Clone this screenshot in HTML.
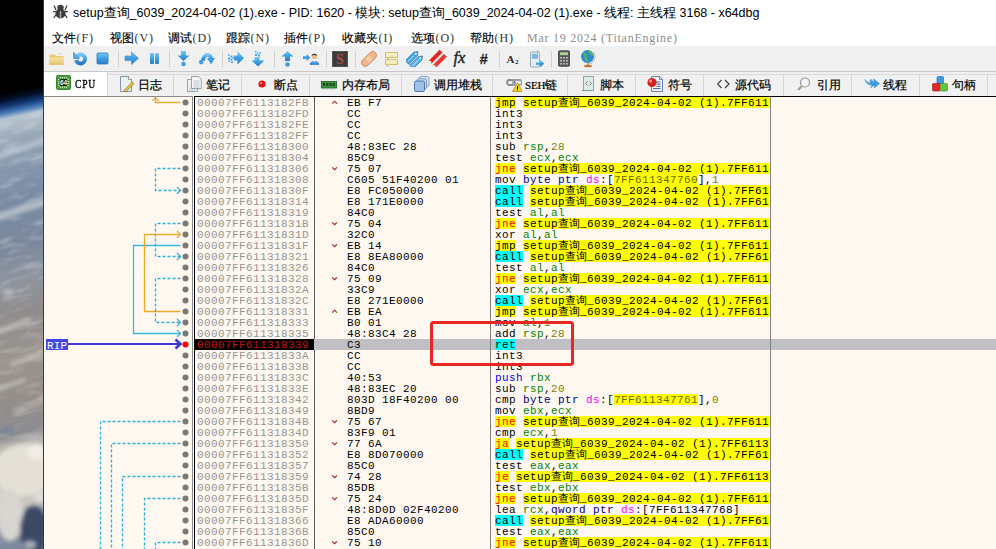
<!DOCTYPE html>
<html><head><meta charset="utf-8">
<style>
*{margin:0;padding:0;box-sizing:border-box}
html,body{width:996px;height:549px;overflow:hidden;background:#000}
body{position:relative;font-family:"Liberation Sans",sans-serif}
.abs{position:absolute}
#earth{position:absolute;left:0;top:0;width:44px;height:549px;overflow:hidden;
 background:
 linear-gradient(160deg,transparent 150px,rgba(230,235,240,.3) 156px,transparent 162px),
 linear-gradient(155deg,transparent 200px,rgba(240,240,240,.45) 206px,rgba(255,255,255,.15) 214px,transparent 218px),
 linear-gradient(158deg,transparent 300px,rgba(235,232,225,.3) 306px,transparent 314px),
 linear-gradient(150deg,transparent 335px,rgba(90,100,120,.35) 340px,transparent 346px),
 linear-gradient(170deg,#000 0,#000 90px,#020a20 96px,#10306a 102px,#5a86b8 108px,#a6b4c4 116px,#aab4c0 124px,#8a9cb0 140px,#7c90a8 180px,#7a8ca2 230px,#8a96a6 270px,#9a9ea4 300px,#8c8a8a 330px,#9a948e 370px,#8c8a88 400px,#a8a49c 420px,#d8d4ca 440px,#e8e4dc 470px,#c8c8c4 495px,#8090a0 515px,#5a6a7e 535px,#d0d0d0 549px)}
#win{position:absolute;left:44px;top:0;width:952px;height:549px;background:#fff}
#winbd{position:absolute;left:43px;top:0;width:1px;height:549px;background:#3a3a3a}
#title{position:absolute;left:73px;top:5px;font-size:12.5px;color:#000;white-space:nowrap;letter-spacing:0}
#menu{position:absolute;left:44px;top:28px;width:952px;height:18px}
.mi{position:absolute;top:2px;font-size:12px;white-space:nowrap;color:#000;-webkit-text-stroke:0.15px #000}
.mi span{font-family:"Liberation Serif",serif;font-size:12px;letter-spacing:0.9px;margin-left:0.5px;-webkit-text-stroke:0;color:#333}
#tb{position:absolute;left:44px;top:46px;width:952px;height:26px;background:#f0f0f0;border-bottom:1px solid #c9c9c9}
.sep{position:absolute;top:51px;width:1px;height:16px;background:#d2d2d2}
#tabs{position:absolute;left:44px;top:72px;width:952px;height:24px;background:#f0f0f0}
.tab{position:absolute;top:74px;height:22px;border-left:1px solid #d4d4d4;border-top:1px solid #dadada;background:#f0f0f0}
.tabt{position:absolute;top:77px;font-size:12px;white-space:nowrap;color:#000;-webkit-text-stroke:0.2px #000}
#panel{position:absolute;left:44px;top:96px;width:952px;height:453px;background:#fff8f0}
.row{position:absolute;left:0;width:996px;height:11px;font-family:"Liberation Mono",monospace;font-size:11px;letter-spacing:0.4px;line-height:13px;white-space:nowrap}
.row span{position:absolute;top:0;height:11px;overflow:hidden}
.row .a{left:197px;color:#959595}
.row .mk{left:331px;color:#c03030;font-size:10px}
.row .by{left:347px;color:#000}
.row .ds{left:495px;width:274.5px;color:#000}
.row b{font-weight:normal}
.row i{font-style:normal;letter-spacing:0;font-size:11px}
.row.rip{background:linear-gradient(90deg,transparent 314px,#c0bfc3 314px)}
.row.rip .a{left:195px;width:119px;background:#000;color:#c81010;padding-left:2px}
.cl{background:#00ffff}
.jm{background:#ffff00}
.jc{background:#ffff00;color:#ff0000}
.ad{background:#ffff00;display:inline-block;width:300px}
.r{color:#008300}
.v{color:#828200}
.sz{color:#000083}
.sg{color:#ff00ff}
.ma{background:#ffff00;color:#6a6a00}
.pu{color:#0000ff}
#vl1{position:absolute;left:192px;top:96px;width:1px;height:453px;background:#8a8a8a}
#addrbox{position:absolute;left:194px;top:96px;width:121px;height:453px;border-left:1.5px solid #000;border-right:1px solid #555}
#topline{position:absolute;left:194px;top:96px;width:802px;height:1px;background:#000}
#sidetop{position:absolute;left:44px;top:96px;width:149px;height:1px;background:#8a8a8a}
#dvl{position:absolute;left:490px;top:96px;width:1px;height:453px;background:#808080}
#dvr{position:absolute;left:770px;top:96px;width:1px;height:453px;background:#808080}
#redbox{position:absolute;left:430px;top:321px;width:143.5px;height:45px;border:3px solid #ea2622;border-radius:3.5px}
#rip{position:absolute;left:46px;top:339px;width:22px;height:11px;overflow:hidden;background:#4444e4;color:#fff;font-family:"Liberation Mono",monospace;font-size:11px;line-height:14px;letter-spacing:0.2px;padding-left:1px}
</style></head><body>
<div id="earth"><svg class="abs" style="left:0;top:0" width="44" height="549" viewBox="0 0 44 549">
<defs>
<linearGradient id="eg" x1="0" y1="0" x2="0" y2="549" gradientUnits="userSpaceOnUse">
<stop offset="0" stop-color="#000"/>
<stop offset="0.155" stop-color="#000"/>
<stop offset="0.168" stop-color="#04102a"/>
<stop offset="0.18" stop-color="#143a78"/>
<stop offset="0.192" stop-color="#4c7cb8"/>
<stop offset="0.202" stop-color="#b4c4d4"/>
<stop offset="0.215" stop-color="#b0bcc8"/>
<stop offset="0.24" stop-color="#9aa8b8"/>
<stop offset="0.30" stop-color="#8496ac"/>
<stop offset="0.36" stop-color="#788aa2"/>
<stop offset="0.44" stop-color="#7c889c"/>
<stop offset="0.50" stop-color="#8e949e"/>
<stop offset="0.56" stop-color="#908c8c"/>
<stop offset="0.64" stop-color="#9a948e"/>
<stop offset="0.72" stop-color="#948e8a"/>
<stop offset="0.78" stop-color="#8c8c90"/>
<stop offset="0.80" stop-color="#b8b4ae"/>
<stop offset="0.84" stop-color="#d8d4cc"/>
<stop offset="0.90" stop-color="#ccc8c0"/>
<stop offset="0.95" stop-color="#8a90a0"/>
<stop offset="1" stop-color="#76849a"/>
</linearGradient>
<filter id="eb" x="-50%" y="-50%" width="200%" height="200%"><feGaussianBlur stdDeviation="2"/></filter>
<filter id="tx" x="0" y="0" width="100%" height="100%"><feTurbulence type="fractalNoise" baseFrequency="0.04 0.13" numOctaves="3" seed="7"/><feColorMatrix type="matrix" values="0 0 0 0 1  0 0 0 0 1  0 0 0 0 1  1.6 0 0 0 -0.75"/></filter>
<filter id="eb1" x="-50%" y="-50%" width="200%" height="200%"><feGaussianBlur stdDeviation="1"/></filter>
</defs>
<g transform="translate(0,9) skewY(-12)">
<rect x="0" y="0" width="44" height="560" fill="url(#eg)"/>
</g>
<g filter="url(#eb)" opacity="0.5">
<path d="M-5 155 L50 136 L50 141 L-5 160z" fill="#dfe6ee"/>
<path d="M-5 214 L50 197 L50 204 L-5 221z" fill="#f4f4f4"/>
<path d="M-5 330 L30 318 L30 323 L-5 335z" fill="#f0f0f0"/>
<path d="M10 362 L50 346 L50 352 L10 368z" fill="#d8d0c4"/>
<path d="M-5 388 L25 378 L25 382 L-5 392z" fill="#e8e4dc"/>
<path d="M15 410 L50 396 L50 401 L15 415z" fill="#cfc8bc"/>
<ellipse cx="8" cy="292" rx="6" ry="3" fill="#e8e8e8"/>
</g>
<g transform="skewY(-14)"><rect x="0" y="120" width="44" height="450" filter="url(#tx)" opacity="0.4"/></g>
<g filter="url(#eb)">
<ellipse cx="24" cy="470" rx="30" ry="26" fill="#e4e0d6"/><ellipse cx="36" cy="452" rx="10" ry="8" fill="#f0ece4"/>
<ellipse cx="10" cy="515" rx="13" ry="26" fill="#d8d6d0"/>
<ellipse cx="34" cy="530" rx="14" ry="24" fill="#3a4864"/>
<ellipse cx="30" cy="545" rx="6" ry="4" fill="#a8b0bc"/>
<ellipse cx="40" cy="498" rx="5" ry="4" fill="#e4e4e4"/>
<ellipse cx="6" cy="430" rx="8" ry="4" fill="#7a8498"/>
</g>
</svg></div>
<div id="win"></div>
<div id="winbd"></div>
<!-- title -->
<svg class="abs" style="left:52px;top:4px" width="17" height="15" viewBox="0 0 17 15">
 <g fill="#3c3c3c"><ellipse cx="8.5" cy="9.5" rx="5" ry="5"/><ellipse cx="8.5" cy="3.6" rx="3.2" ry="2.8"/></g>
 <g stroke="#3c3c3c" stroke-width="1.3" fill="none"><path d="M1 7.7H16M2 1.5 L4 6 M15 1.5 L13 6 M1.8 14 L4 10.5 M15.2 14 L13 10.5"/></g>
 <rect x="7.8" y="7" width="1.4" height="7" fill="#aaa"/>
</svg>
<div id="title">setup查询_6039_2024-04-02 (1).exe - PID: 1620 - 模块: setup查询_6039_2024-04-02 (1).exe - 线程: 主线程 3168 - x64dbg</div>
<!-- menu -->
<div class="mi" style="left:52px;top:30px">文件<span>(F)</span></div>
<div class="mi" style="left:110px;top:30px">视图<span>(V)</span></div>
<div class="mi" style="left:168px;top:30px">调试<span>(D)</span></div>
<div class="mi" style="left:226px;top:30px">跟踪<span>(N)</span></div>
<div class="mi" style="left:284px;top:30px">插件<span>(P)</span></div>
<div class="mi" style="left:342px;top:30px">收藏夹<span>(I)</span></div>
<div class="mi" style="left:411px;top:30px">选项<span>(O)</span></div>
<div class="mi" style="left:470px;top:30px">帮助<span>(H)</span></div>
<div class="mi" style="left:527px;top:31px;font-family:'Liberation Serif',serif;font-size:12px;letter-spacing:0.75px;color:#8e8e8e;-webkit-text-stroke:0">Mar 19 2024 (TitanEngine)</div>
<!-- toolbar -->
<div id="tb"></div>
<svg width="0" height="0" style="position:absolute"><defs>
<linearGradient id="gb" x1="0" y1="0" x2="0" y2="1"><stop offset="0" stop-color="#7cc8f4"/><stop offset="0.5" stop-color="#3d9ee4"/><stop offset="1" stop-color="#2a7cc8"/></linearGradient>
<linearGradient id="gy" x1="0" y1="0" x2="0" y2="1"><stop offset="0" stop-color="#f6e4a4"/><stop offset="1" stop-color="#e2c46c"/></linearGradient>
<linearGradient id="gc" x1="0" y1="0" x2="0" y2="1"><stop offset="0" stop-color="#fbf6d6"/><stop offset="1" stop-color="#ece098"/></linearGradient>
</defs></svg>
<svg class="abs" style="left:48px;top:52px" width="18" height="14" viewBox="0 0 18 14"><path d="M1.5 2.5h5.5l1.5 1.5h7v9h-14z" fill="#e8cc74"/><path d="M1.5 5.5h14.5l-0.5 7.5h-14z" fill="url(#gy)"/><path d="M10 1.5h4l1 1h-5z" fill="#d8d8c8"/></svg>
<svg class="abs" style="left:71px;top:49px" width="18" height="18" viewBox="0 0 18 18"><path d="M6.4 6.8 A4.5 4.5 0 1 1 5.2 10.8" fill="none" stroke="url(#gb)" stroke-width="3.9"/><path d="M2.6 3.4 L2.6 9.4 L8.6 9.4 z" fill="#5cb0ea" stroke="#3a88cc" stroke-width="0.8" stroke-linejoin="round"/></svg>
<svg class="abs" style="left:96px;top:52px" width="13" height="13" viewBox="0 0 13 13"><rect x="1" y="1" width="11" height="11" rx="1" fill="url(#gb)" stroke="#2c7ac4" stroke-width="0.8"/></svg>
<svg class="abs" style="left:124px;top:51px" width="16" height="15" viewBox="0 0 16 15"><path d="M1 5h6.5v-4l7 6.3-7 6.3v-4h-6.5z" fill="url(#gb)" stroke="#3a8ad0" stroke-width="0.6"/></svg>
<svg class="abs" style="left:149px;top:52px" width="11" height="13" viewBox="0 0 11 13"><rect x="1" y="1" width="4" height="11" rx="1" fill="url(#gb)"/><rect x="6" y="1" width="4" height="11" rx="1" fill="url(#gb)"/></svg>
<svg class="abs" style="left:177px;top:50px" width="13" height="17" viewBox="0 0 13 17"><path d="M4 1h5v4.5h3.5l-6 5.5-6-5.5h3.5z" fill="url(#gb)"/><circle cx="6.5" cy="14" r="2.3" fill="#3d9ee4"/></svg>
<svg class="abs" style="left:198px;top:50px" width="18" height="17" viewBox="0 0 18 17"><path d="M5 10.5 C5.5 6 8 4.5 10.5 5 C12 5.3 12.8 6.5 13 8" fill="none" stroke="url(#gb)" stroke-width="3.8"/><path d="M9 8 L17 8 L13 14.6z" fill="#3d9ee4"/><circle cx="3.3" cy="12.1" r="2.3" fill="#3d9ee4"/></svg>
<svg class="abs" style="left:227px;top:51px" width="18" height="15" viewBox="0 0 18 15"><path d="M7 4.5h3.5v-4l6.5 6.5-6.5 6.5v-4h-3.5z" fill="url(#gb)"/><g fill="#4aa4e6"><rect x="1" y="3.5" width="1.5" height="1.5"/><rect x="3.5" y="4.5" width="2" height="2"/><rect x="1" y="6.5" width="2" height="2"/><rect x="3.5" y="7.5" width="2" height="2"/><rect x="1.5" y="9.5" width="1.5" height="1.5"/><rect x="4" y="10.5" width="2" height="1.5"/><rect x="5.5" y="6" width="1.5" height="1.5"/></g></svg>
<svg class="abs" style="left:251px;top:50px" width="15" height="17" viewBox="0 0 15 17"><path d="M3.5 7h5v3.5h5l-6.5 6-6.5-6h3z" fill="url(#gb)"/><g fill="#4aa4e6"><rect x="4" y="1" width="1.5" height="1.5"/><rect x="6" y="2.5" width="1.5" height="1.5"/><rect x="8.5" y="2" width="1.5" height="1.5"/><rect x="4" y="4" width="2" height="2"/><rect x="7" y="4.5" width="2" height="2"/></g></svg>
<svg class="abs" style="left:281px;top:50px" width="13" height="17" viewBox="0 0 13 17"><path d="M6.5 1l6 5.5h-3.5v4.5h-5v-4.5h-3.5z" fill="url(#gb)"/><circle cx="6.5" cy="14.5" r="2.3" fill="#3d9ee4"/></svg>
<svg class="abs" style="left:302px;top:51px" width="18" height="15" viewBox="0 0 18 15"><path d="M1 5.3h3.6v-2.3l3.8 3.6-3.8 3.6v-2.3h-3.6z" fill="#3d9ee4"/><circle cx="12.4" cy="5.4" r="2.7" fill="#e8c090"/><path d="M9.6 5 C9.6 2 15.2 2 15.2 5 C14 3.8 11 3.8 9.6 5z" fill="#3a2a1a"/><path d="M8 13.5 C8 9.2 16.8 9.2 16.8 13.5z" fill="url(#gb)" stroke="#2a70b8" stroke-width="0.6"/><path d="M11.6 9 L12.4 11.5 L13.2 9z" fill="#fff"/></svg>
<svg class="abs" style="left:332px;top:51px" width="16" height="16" viewBox="0 0 16 16"><rect width="16" height="16" fill="#3c3a3a"/><rect x="0.5" y="0.5" width="15" height="15" fill="none" stroke="#555"/><text x="8" y="13" text-anchor="middle" font-family="Liberation Serif" font-weight="bold" font-size="14" fill="#b04a4e">S</text></svg>
<svg class="abs" style="left:360px;top:50px" width="18" height="18" viewBox="0 0 18 18"><g transform="rotate(-45 9 9)"><rect x="0" y="5.2" width="18" height="7.6" rx="3.8" fill="#f2b48a" stroke="#d08a60" stroke-width="0.9"/><rect x="6.5" y="6.5" width="5" height="5" fill="#f8d0a8"/></g></svg>
<svg class="abs" style="left:384px;top:51px" width="15" height="16" viewBox="0 0 15 16"><path d="M1.5 1.5h12v5h-8l-2 1.8v-1.8h-2z" fill="url(#gc)" stroke="#c8b464" stroke-width="0.9"/><path d="M1.5 8.8h12v4.7h-8l-2 1.8v-1.8h-2z" fill="url(#gc)" stroke="#c8b464" stroke-width="0.9"/></svg>
<svg class="abs" style="left:406px;top:50px" width="18" height="17" viewBox="0 0 18 17"><g transform="rotate(-45 9 8.5)"><path d="M0.5 3.2h12l3.5 2.5-3.5 2.5h-12z" fill="#48a8e4" stroke="#2a6eb4" stroke-width="0.7"/><circle cx="13" cy="5.7" r="0.9" fill="#fff"/><path d="M2 5.7h8" stroke="#d8eeff" stroke-width="0.8"/><path d="M0.5 9.5h12l3.5 2.5-3.5 2.5h-12z" fill="#58b4ec" stroke="#2a6eb4" stroke-width="0.7"/><circle cx="13" cy="12" r="0.9" fill="#fff"/><path d="M2 12h8" stroke="#d8eeff" stroke-width="0.8"/></g></svg>
<svg class="abs" style="left:429px;top:50px" width="18" height="17" viewBox="0 0 18 17"><g transform="rotate(-45 9 8.5)"><path d="M0.5 3.5h15.5v4h-15.5l1.8-2z" fill="#e42424"/><path d="M0.5 9.5h15.5v4h-15.5l1.8-2z" fill="#f03434"/><path d="M16 3.5v4M16 9.5v4" stroke="#b01010" stroke-width="0.8"/></g></svg>
<svg class="abs" style="left:452px;top:49px" width="18" height="18" viewBox="0 0 18 18"><text x="1.5" y="14" font-family="Liberation Serif" font-style="italic" font-size="16.5" fill="#2a2a2a" stroke="#2a2a2a" stroke-width="0.45">fx</text></svg>
<svg class="abs" style="left:478.5px;top:49px" width="14" height="18" viewBox="0 0 14 18"><text x="0.5" y="14.5" font-family="Liberation Sans" font-weight="bold" font-style="italic" font-size="14.5" fill="#2a2a2a" stroke="#2a2a2a" stroke-width="0.3">#</text></svg>
<svg class="abs" style="left:506px;top:53px" width="15" height="12" viewBox="0 0 15 12"><text x="0.5" y="10" font-family="Liberation Serif" font-weight="bold" font-size="11" fill="#2e2e2e">A</text><text x="9" y="10.5" font-family="Liberation Serif" font-weight="bold" font-size="7" fill="#2e2e2e">2</text></svg>
<svg class="abs" style="left:529px;top:50px" width="17" height="18" viewBox="0 0 17 18"><rect x="1.5" y="2" width="9" height="15" rx="1.2" fill="#e6ecf0" stroke="#8898a8" stroke-width="0.8"/><rect x="3" y="3.8" width="6" height="5" fill="#7ab8e4"/><path d="M9 0.5v2" stroke="#8898a8"/><path d="M7 12.5h4v-2.5l4.5 3.6-4.5 3.6v-2.5h-4z" fill="url(#gb)"/></svg>
<svg class="abs" style="left:558px;top:50px" width="12" height="17" viewBox="0 0 12 17"><rect x="0.5" y="0.8" width="11" height="15.5" rx="1" fill="#5a5a5a" stroke="#3a3a3a" stroke-width="0.8"/><rect x="2" y="2.3" width="8" height="2.8" fill="#a8d090"/><g fill="#b8b8b8"><rect x="2" y="7" width="2" height="1.6"/><rect x="5" y="7" width="2" height="1.6"/><rect x="8" y="7" width="2" height="1.6"/><rect x="2" y="10" width="2" height="1.6"/><rect x="5" y="10" width="2" height="1.6"/><rect x="8" y="10" width="2" height="1.6"/><rect x="2" y="13" width="2" height="1.6"/><rect x="5" y="13" width="2" height="1.6"/><rect x="8" y="13" width="2" height="1.6"/></g></svg>
<svg class="abs" style="left:580px;top:49px" width="16" height="19" viewBox="0 0 16 19"><circle cx="7.5" cy="7.5" r="6.5" fill="#2c8ad4"/><path d="M3 4.5c2 0 3 1.5 2.5 3.5s1.5 2.5 2 4.5M8.5 2c1 2 3.5 1.5 4 4.5" stroke="#5cb84a" stroke-width="2.2" fill="none"/><path d="M13.5 3 A7.5 7.5 0 0 1 9 15" stroke="#b0b0b0" stroke-width="0.9" fill="none"/><ellipse cx="8" cy="17" rx="4" ry="1.3" fill="#c87434"/><rect x="7.3" y="14.2" width="1.4" height="2.5" fill="#c87434"/></svg>
<div class="sep" style="left:117.5px"></div>
<div class="sep" style="left:169px"></div>
<div class="sep" style="left:221.5px"></div>
<div class="sep" style="left:273.5px"></div>
<div class="sep" style="left:325.5px"></div>
<div class="sep" style="left:354.5px"></div>
<div class="sep" style="left:498.5px"></div>
<div class="sep" style="left:550.5px"></div>
<!-- tabs -->
<div id="tabs"></div>
<div class="abs" style="left:44px;top:72px;width:64px;height:24px;background:#fff;border-right:1px solid #d0d0d0"></div>
<div class="tab" style="left:107px;width:66px"></div>
<svg class="abs" style="left:119px;top:76px" width="16" height="16" viewBox="0 0 16 16"><path d="M1.5 0.5h8l3 3v12h-11z" fill="#e8f0f2" stroke="#7a8a96" stroke-width="0.9"/><path d="M9.5 0.5v3h3" fill="#fff" stroke="#7a8a96" stroke-width="0.8"/><path d="M5.5 14 L13.2 6 L15 7.8 L7.3 15.6 L5 16z" fill="#f0c040" stroke="#806020" stroke-width="0.6"/></svg>
<div class="tabt" style="left:138px">日志</div>
<div class="tab" style="left:173px;width:68px"></div>
<svg class="abs" style="left:186.5px;top:76px" width="16" height="16" viewBox="0 0 16 16"><path d="M0.5 3.5h8l2 2v10h-10z" fill="#eef2f4" stroke="#8a9aa4" stroke-width="0.9"/><path d="M4.5 0.5h7l2.8 2.8v9.2h-9.8z" fill="#f4f6f8" stroke="#8a9aa4" stroke-width="0.9"/><g stroke="#a8b8c4" stroke-width="0.7"><path d="M6.5 5h6M6.5 7h6M6.5 9h6M6.5 11h6M2 12h3M2 14h6"/></g></svg>
<div class="tabt" style="left:205.5px">笔记</div>
<div class="tab" style="left:241px;width:68px"></div>
<svg class="abs" style="left:257.5px;top:80px" width="8" height="8" viewBox="0 0 8 8"><circle cx="4" cy="4" r="3.6" fill="#e01010"/><circle cx="3" cy="3" r="1.2" fill="#ff8080"/></svg>
<div class="tabt" style="left:273.5px">断点</div>
<div class="tab" style="left:309px;width:92px"></div>
<svg class="abs" style="left:321px;top:78.5px" width="16" height="11" viewBox="0 0 16 11"><rect x="0.5" y="2.5" width="15" height="6.5" fill="#3c9a3c" stroke="#1c5a1c" stroke-width="0.8"/><g fill="#1e4a1e"><rect x="2" y="4" width="2.2" height="3"/><rect x="5.2" y="4" width="2.2" height="3"/><rect x="8.4" y="4" width="2.2" height="3"/><rect x="11.6" y="4" width="2.2" height="3"/></g><g fill="#c8b040"><rect x="2" y="9" width="1" height="1.5"/><rect x="4" y="9" width="1" height="1.5"/><rect x="6" y="9" width="1" height="1.5"/><rect x="8" y="9" width="1" height="1.5"/><rect x="10" y="9" width="1" height="1.5"/><rect x="12" y="9" width="1" height="1.5"/></g></svg>
<div class="tabt" style="left:342px">内存布局</div>
<div class="tab" style="left:401px;width:91px"></div>
<svg class="abs" style="left:413.5px;top:76px" width="16" height="16" viewBox="0 0 16 16"><rect x="5.5" y="0.5" width="9.5" height="10" rx="1.5" fill="#d8e6f4" stroke="#7a94b8" stroke-width="0.8"/><rect x="3" y="2.8" width="9.5" height="10" rx="1.5" fill="#c4d8ee" stroke="#6a88b0" stroke-width="0.8"/><rect x="0.5" y="5" width="10" height="10.5" rx="1.5" fill="#9cc0e8" stroke="#4a70a8" stroke-width="0.9"/></svg>
<div class="tabt" style="left:434px">调用堆栈</div>
<div class="tab" style="left:492px;width:75px"></div>
<svg class="abs" style="left:505.5px;top:76px" width="16" height="16" viewBox="0 0 16 16"><rect x="1" y="4" width="8" height="5" rx="2.5" fill="none" stroke="#8a8a8a" stroke-width="1.8"/><rect x="7" y="4" width="9" height="5" rx="2.5" fill="none" stroke="#a0a0a0" stroke-width="1.8"/><path d="M6.5 15.5l5-8.5 5 8.5z" fill="#f4d428" stroke="#a88a00" stroke-width="0.7"/><rect x="11" y="10" width="1" height="3" fill="#000"/><rect x="11" y="13.6" width="1" height="1" fill="#000"/></svg>
<div class="tabt" style="left:525px"><span style="font-family:'Liberation Serif',serif;font-size:11px;letter-spacing:-0.2px">SEH</span>链</div>
<div class="tab" style="left:567px;width:68px"></div>
<svg class="abs" style="left:581px;top:76px" width="16" height="16" viewBox="0 0 16 16"><path d="M2.5 0.5h10v14h-10z" fill="#dfeaea" stroke="#8a9a9a" stroke-width="0.9"/><path d="M6.5 5.5l-2 2 2 2M8.5 5.5l2 2-2 2" stroke="#707070" stroke-width="0.9" fill="none"/><path d="M0.5 14.5h12" stroke="#8a9a9a"/></svg>
<div class="tabt" style="left:599.5px">脚本</div>
<div class="tab" style="left:635px;width:67.5px"></div>
<svg class="abs" style="left:647px;top:76px" width="16" height="16" viewBox="0 0 16 16"><path d="M4.5 0.5h8l3 3v12h-11z" fill="#f4f6fa" stroke="#5a76a8" stroke-width="0.9"/><path d="M12.5 0.5v3h3" fill="none" stroke="#5a76a8" stroke-width="0.8"/><g stroke="#3a62b0" stroke-width="1"><path d="M8.5 6h5M9.5 8.2h4M9.5 10.4h4M6 12.6h7.5"/></g><circle cx="5" cy="6.5" r="4.6" fill="#d42222"/><circle cx="3.6" cy="5" r="1.6" fill="#ff9a9a"/></svg>
<div class="tabt" style="left:668px">符号</div>
<div class="tab" style="left:702.5px;width:80.5px"></div>
<svg class="abs" style="left:717px;top:78px" width="13" height="12" viewBox="0 0 13 12"><path d="M4.5 2l-4 4 4 4M8 2l4 4-4 4" stroke="#404040" stroke-width="1.2" fill="none"/></svg>
<div class="tabt" style="left:734.5px">源代码</div>
<div class="tab" style="left:783px;width:68px"></div>
<svg class="abs" style="left:797px;top:77px" width="13" height="14" viewBox="0 0 13 14"><circle cx="8" cy="5.5" r="4.5" fill="#f4f4f4" stroke="#9a9a9a" stroke-width="1.2"/><path d="M5 9 L1 13" stroke="#b0a080" stroke-width="2.2"/></svg>
<div class="tabt" style="left:816.5px">引用</div>
<div class="tab" style="left:851px;width:67.5px"></div>
<svg class="abs" style="left:863.5px;top:76px" width="16" height="16" viewBox="0 0 16 16"><path d="M1 3.5 C3 6.5 6 7 8 6.5 L6.5 3 L11.5 7.5 L7 12 L8 9 C5 9.5 2 8 1 3.5z" fill="#58b0ec" stroke="#3a8ad0" stroke-width="0.5"/><path d="M6 4 C8 7 10 7.5 11 7 L9.5 3 L15.5 7.5 L10 12 L11 9.5 C9 10 7 8.5 6 4z" fill="#3d9ee4" stroke="#2a7cc8" stroke-width="0.5"/></svg>
<div class="tabt" style="left:883px">线程</div>
<div class="tab" style="left:918.5px;width:68.5px"></div>
<svg class="abs" style="left:931.5px;top:76px" width="16" height="16" viewBox="0 0 16 16"><rect x="5" y="0.5" width="6.5" height="7.5" rx="1" fill="#3a9ae0" stroke="#1a68b0" stroke-width="0.6"/><rect x="0.5" y="7.5" width="7.5" height="7.5" rx="1" fill="#e42828" stroke="#a01010" stroke-width="0.6"/><rect x="8" y="7.5" width="7.5" height="7.5" rx="1" fill="#6cc040" stroke="#3a8a20" stroke-width="0.6"/></svg>
<div class="tabt" style="left:951.5px">句柄</div>
<div class="tab" style="left:987px;width:113px"></div>
<svg class="abs" style="left:56px;top:75px" width="15" height="15" viewBox="0 0 15 15"><rect x="0.5" y="0.5" width="14" height="14" rx="1.2" fill="#48a040" stroke="#2a6a22" stroke-width="0.8"/><g fill="#b8e8a0"><rect x="4" y="2" width="1" height="1.6"/><rect x="4" y="11.4" width="1" height="1.6"/><rect x="2" y="4" width="1.6" height="1"/><rect x="11.4" y="4" width="1.6" height="1"/><rect x="6" y="2" width="1" height="1.6"/><rect x="6" y="11.4" width="1" height="1.6"/><rect x="2" y="6" width="1.6" height="1"/><rect x="11.4" y="6" width="1.6" height="1"/><rect x="8" y="2" width="1" height="1.6"/><rect x="8" y="11.4" width="1" height="1.6"/><rect x="2" y="8" width="1.6" height="1"/><rect x="11.4" y="8" width="1.6" height="1"/><rect x="10" y="2" width="1" height="1.6"/><rect x="10" y="11.4" width="1" height="1.6"/><rect x="2" y="10" width="1.6" height="1"/><rect x="11.4" y="10" width="1.6" height="1"/></g><rect x="3.8" y="4" width="7.4" height="7" fill="#1a2a18"/><text x="7.5" y="10.2" text-anchor="middle" font-family="Liberation Sans" font-weight="bold" font-size="6.5" fill="#f0f0f0">64</text></svg>
<div class="tabt" style="left:75px;top:77px;font-family:'Liberation Serif',serif;font-size:12px;letter-spacing:1px;transform:scaleX(0.8);transform-origin:0 0;-webkit-text-stroke:0.35px #000;color:#000">CPU</div>
<!-- panel -->
<div id="panel"></div>
<div id="sidetop"></div>
<div id="vl1"></div>
<div id="addrbox"></div>
<div class="row" style="top:97px"><span class="a">00007FF6113182FB</span><span class="mk"></span><span class="by">EB F7</span><span class="ds"><b class="jm">jmp</b> <b class="ad">setup<i>查询</i>_6039_2024-04-02 (1).7FF611</b></span></div>
<div class="row" style="top:108px"><span class="a">00007FF6113182FD</span><span class="mk"></span><span class="by">CC</span><span class="ds">int3</span></div>
<div class="row" style="top:119px"><span class="a">00007FF6113182FE</span><span class="mk"></span><span class="by">CC</span><span class="ds">int3</span></div>
<div class="row" style="top:130px"><span class="a">00007FF6113182FF</span><span class="mk"></span><span class="by">CC</span><span class="ds">int3</span></div>
<div class="row" style="top:141px"><span class="a">00007FF611318300</span><span class="mk"></span><span class="by">48:83EC 28</span><span class="ds">sub <b class="r">rsp</b>,<b class="v">28</b></span></div>
<div class="row" style="top:152px"><span class="a">00007FF611318304</span><span class="mk"></span><span class="by">85C9</span><span class="ds">test <b class="r">ecx</b>,<b class="r">ecx</b></span></div>
<div class="row" style="top:163px"><span class="a">00007FF611318306</span><span class="mk"></span><span class="by">75 07</span><span class="ds"><b class="jc">jne</b> <b class="ad">setup<i>查询</i>_6039_2024-04-02 (1).7FF611</b></span></div>
<div class="row" style="top:174px"><span class="a">00007FF611318308</span><span class="mk"></span><span class="by">C605 51F40200 01</span><span class="ds">mov <b class="sz">byte ptr</b> <b class="sg">ds</b>:[<b class="ma">7FF611347760</b>],<b class="v">1</b></span></div>
<div class="row" style="top:185px"><span class="a">00007FF61131830F</span><span class="mk"></span><span class="by">E8 FC050000</span><span class="ds"><b class="cl">call</b> <b class="ad">setup<i>查询</i>_6039_2024-04-02 (1).7FF61</b></span></div>
<div class="row" style="top:196px"><span class="a">00007FF611318314</span><span class="mk"></span><span class="by">E8 171E0000</span><span class="ds"><b class="cl">call</b> <b class="ad">setup<i>查询</i>_6039_2024-04-02 (1).7FF61</b></span></div>
<div class="row" style="top:207px"><span class="a">00007FF611318319</span><span class="mk"></span><span class="by">84C0</span><span class="ds">test <b class="r">al</b>,<b class="r">al</b></span></div>
<div class="row" style="top:218px"><span class="a">00007FF61131831B</span><span class="mk"></span><span class="by">75 04</span><span class="ds"><b class="jc">jne</b> <b class="ad">setup<i>查询</i>_6039_2024-04-02 (1).7FF611</b></span></div>
<div class="row" style="top:229px"><span class="a">00007FF61131831D</span><span class="mk"></span><span class="by">32C0</span><span class="ds">xor <b class="r">al</b>,<b class="r">al</b></span></div>
<div class="row" style="top:240px"><span class="a">00007FF61131831F</span><span class="mk"></span><span class="by">EB 14</span><span class="ds"><b class="jm">jmp</b> <b class="ad">setup<i>查询</i>_6039_2024-04-02 (1).7FF611</b></span></div>
<div class="row" style="top:251px"><span class="a">00007FF611318321</span><span class="mk"></span><span class="by">E8 8EA80000</span><span class="ds"><b class="cl">call</b> <b class="ad">setup<i>查询</i>_6039_2024-04-02 (1).7FF61</b></span></div>
<div class="row" style="top:262px"><span class="a">00007FF611318326</span><span class="mk"></span><span class="by">84C0</span><span class="ds">test <b class="r">al</b>,<b class="r">al</b></span></div>
<div class="row" style="top:273px"><span class="a">00007FF611318328</span><span class="mk"></span><span class="by">75 09</span><span class="ds"><b class="jc">jne</b> <b class="ad">setup<i>查询</i>_6039_2024-04-02 (1).7FF611</b></span></div>
<div class="row" style="top:284px"><span class="a">00007FF61131832A</span><span class="mk"></span><span class="by">33C9</span><span class="ds">xor <b class="r">ecx</b>,<b class="r">ecx</b></span></div>
<div class="row" style="top:295px"><span class="a">00007FF61131832C</span><span class="mk"></span><span class="by">E8 271E0000</span><span class="ds"><b class="cl">call</b> <b class="ad">setup<i>查询</i>_6039_2024-04-02 (1).7FF61</b></span></div>
<div class="row" style="top:306px"><span class="a">00007FF611318331</span><span class="mk"></span><span class="by">EB EA</span><span class="ds"><b class="jm">jmp</b> <b class="ad">setup<i>查询</i>_6039_2024-04-02 (1).7FF611</b></span></div>
<div class="row" style="top:317px"><span class="a">00007FF611318333</span><span class="mk"></span><span class="by">B0 01</span><span class="ds">mov <b class="r">al</b>,<b class="v">1</b></span></div>
<div class="row" style="top:328px"><span class="a">00007FF611318335</span><span class="mk"></span><span class="by">48:83C4 28</span><span class="ds">add <b class="r">rsp</b>,<b class="v">28</b></span></div>
<div class="row rip" style="top:339px"><span class="a">00007FF611318339</span><span class="mk"></span><span class="by">C3</span><span class="ds"><b class="cl">ret</b></span></div>
<div class="row" style="top:350px"><span class="a">00007FF61131833A</span><span class="mk"></span><span class="by">CC</span><span class="ds">int3</span></div>
<div class="row" style="top:361px"><span class="a">00007FF61131833B</span><span class="mk"></span><span class="by">CC</span><span class="ds">int3</span></div>
<div class="row" style="top:372px"><span class="a">00007FF61131833C</span><span class="mk"></span><span class="by">40:53</span><span class="ds"><b class="pu">push</b> <b class="r">rbx</b></span></div>
<div class="row" style="top:383px"><span class="a">00007FF61131833E</span><span class="mk"></span><span class="by">48:83EC 20</span><span class="ds">sub <b class="r">rsp</b>,<b class="v">20</b></span></div>
<div class="row" style="top:394px"><span class="a">00007FF611318342</span><span class="mk"></span><span class="by">803D 18F40200 00</span><span class="ds">cmp <b class="sz">byte ptr</b> <b class="sg">ds</b>:[<b class="ma">7FF611347761</b>],<b class="v">0</b></span></div>
<div class="row" style="top:405px"><span class="a">00007FF611318349</span><span class="mk"></span><span class="by">8BD9</span><span class="ds">mov <b class="r">ebx</b>,<b class="r">ecx</b></span></div>
<div class="row" style="top:416px"><span class="a">00007FF61131834B</span><span class="mk"></span><span class="by">75 67</span><span class="ds"><b class="jc">jne</b> <b class="ad">setup<i>查询</i>_6039_2024-04-02 (1).7FF611</b></span></div>
<div class="row" style="top:427px"><span class="a">00007FF61131834D</span><span class="mk"></span><span class="by">83F9 01</span><span class="ds">cmp <b class="r">ecx</b>,<b class="v">1</b></span></div>
<div class="row" style="top:438px"><span class="a">00007FF611318350</span><span class="mk"></span><span class="by">77 6A</span><span class="ds"><b class="jc">ja</b> <b class="ad">setup<i>查询</i>_6039_2024-04-02 (1).7FF6113</b></span></div>
<div class="row" style="top:449px"><span class="a">00007FF611318352</span><span class="mk"></span><span class="by">E8 8D070000</span><span class="ds"><b class="cl">call</b> <b class="ad">setup<i>查询</i>_6039_2024-04-02 (1).7FF61</b></span></div>
<div class="row" style="top:460px"><span class="a">00007FF611318357</span><span class="mk"></span><span class="by">85C0</span><span class="ds">test <b class="r">eax</b>,<b class="r">eax</b></span></div>
<div class="row" style="top:471px"><span class="a">00007FF611318359</span><span class="mk"></span><span class="by">74 28</span><span class="ds"><b class="jc">je</b> <b class="ad">setup<i>查询</i>_6039_2024-04-02 (1).7FF6113</b></span></div>
<div class="row" style="top:482px"><span class="a">00007FF61131835B</span><span class="mk"></span><span class="by">85DB</span><span class="ds">test <b class="r">ebx</b>,<b class="r">ebx</b></span></div>
<div class="row" style="top:493px"><span class="a">00007FF61131835D</span><span class="mk"></span><span class="by">75 24</span><span class="ds"><b class="jc">jne</b> <b class="ad">setup<i>查询</i>_6039_2024-04-02 (1).7FF611</b></span></div>
<div class="row" style="top:504px"><span class="a">00007FF61131835F</span><span class="mk"></span><span class="by">48:8D0D 02F40200</span><span class="ds">lea <b class="r">rcx</b>,<b class="sz">qword ptr</b> <b class="sg">ds</b>:[7FF611347768]</span></div>
<div class="row" style="top:515px"><span class="a">00007FF611318366</span><span class="mk"></span><span class="by">E8 ADA60000</span><span class="ds"><b class="cl">call</b> <b class="ad">setup<i>查询</i>_6039_2024-04-02 (1).7FF61</b></span></div>
<div class="row" style="top:526px"><span class="a">00007FF61131836B</span><span class="mk"></span><span class="by">85C0</span><span class="ds">test <b class="r">eax</b>,<b class="r">eax</b></span></div>
<div class="row" style="top:537px"><span class="a">00007FF61131836D</span><span class="mk"></span><span class="by">75 10</span><span class="ds"><b class="jc">jne</b> <b class="ad">setup<i>查询</i>_6039_2024-04-02 (1).7FF611</b></span></div>
<div id="dvl"></div>
<div id="dvr"></div>
<div id="topline"></div>
<svg class="abs" style="left:0;top:0" width="996" height="549">
<circle cx="185.5" cy="102.5" r="3" fill="#7d7871"/>
<circle cx="185.5" cy="113.5" r="3" fill="#7d7871"/>
<circle cx="185.5" cy="124.5" r="3" fill="#7d7871"/>
<circle cx="185.5" cy="135.5" r="3" fill="#7d7871"/>
<circle cx="185.5" cy="146.5" r="3" fill="#7d7871"/>
<circle cx="185.5" cy="157.5" r="3" fill="#7d7871"/>
<circle cx="185.5" cy="168.5" r="3" fill="#7d7871"/>
<circle cx="185.5" cy="179.5" r="3" fill="#7d7871"/>
<circle cx="185.5" cy="190.5" r="3" fill="#7d7871"/>
<circle cx="185.5" cy="201.5" r="3" fill="#7d7871"/>
<circle cx="185.5" cy="212.5" r="3" fill="#7d7871"/>
<circle cx="185.5" cy="223.5" r="3" fill="#7d7871"/>
<circle cx="185.5" cy="234.5" r="3" fill="#7d7871"/>
<circle cx="185.5" cy="245.5" r="3" fill="#7d7871"/>
<circle cx="185.5" cy="256.5" r="3" fill="#7d7871"/>
<circle cx="185.5" cy="267.5" r="3" fill="#7d7871"/>
<circle cx="185.5" cy="278.5" r="3" fill="#7d7871"/>
<circle cx="185.5" cy="289.5" r="3" fill="#7d7871"/>
<circle cx="185.5" cy="300.5" r="3" fill="#7d7871"/>
<circle cx="185.5" cy="311.5" r="3" fill="#7d7871"/>
<circle cx="185.5" cy="322.5" r="3" fill="#7d7871"/>
<circle cx="185.5" cy="333.5" r="3" fill="#7d7871"/>
<circle cx="185.5" cy="344.5" r="3" fill="#ff0000"/>
<circle cx="185.5" cy="355.5" r="3" fill="#7d7871"/>
<circle cx="185.5" cy="366.5" r="3" fill="#7d7871"/>
<circle cx="185.5" cy="377.5" r="3" fill="#7d7871"/>
<circle cx="185.5" cy="388.5" r="3" fill="#7d7871"/>
<circle cx="185.5" cy="399.5" r="3" fill="#7d7871"/>
<circle cx="185.5" cy="410.5" r="3" fill="#7d7871"/>
<circle cx="185.5" cy="421.5" r="3" fill="#7d7871"/>
<circle cx="185.5" cy="432.5" r="3" fill="#7d7871"/>
<circle cx="185.5" cy="443.5" r="3" fill="#7d7871"/>
<circle cx="185.5" cy="454.5" r="3" fill="#7d7871"/>
<circle cx="185.5" cy="465.5" r="3" fill="#7d7871"/>
<circle cx="185.5" cy="476.5" r="3" fill="#7d7871"/>
<circle cx="185.5" cy="487.5" r="3" fill="#7d7871"/>
<circle cx="185.5" cy="498.5" r="3" fill="#7d7871"/>
<circle cx="185.5" cy="509.5" r="3" fill="#7d7871"/>
<circle cx="185.5" cy="520.5" r="3" fill="#7d7871"/>
<circle cx="185.5" cy="531.5" r="3" fill="#7d7871"/>
<circle cx="185.5" cy="542.5" r="3" fill="#7d7871"/>
<path d="M180.5 102.5 H155.5 V97" fill="none" stroke="#e8aa30" stroke-width="1.4"/><path d="M152.3 100.8 L155.5 97.6 L158.7 100.8" fill="none" stroke="#e8aa30" stroke-width="1.2"/>
<path d="M180.5 168.5 H155.5 V190.5 H180.5" fill="none" stroke="#2aaedc" stroke-width="1.3" stroke-dasharray="3,2"/><path d="M177 187.0 L180.5 190.5 L177 194.0" fill="none" stroke="#2aaedc" stroke-width="1.2"/>
<path d="M180.5 223.5 H155.5 V256.5 H180.5" fill="none" stroke="#2aaedc" stroke-width="1.3" stroke-dasharray="3,2"/><path d="M177 253.0 L180.5 256.5 L177 260.0" fill="none" stroke="#2aaedc" stroke-width="1.2"/>
<path d="M180.5 245.5 H133.5 V333.5 H180.5" fill="none" stroke="#36b6e0" stroke-width="1.3"/><path d="M177 330.0 L180.5 333.5 L177 337.0" fill="none" stroke="#36b6e0" stroke-width="1.2"/>
<path d="M180.5 311.5 H144.5 V234.5 H180.5" fill="none" stroke="#e8aa30" stroke-width="1.3"/><path d="M177 231.0 L180.5 234.5 L177 238.0" fill="none" stroke="#e8aa30" stroke-width="1.2"/>
<path d="M180.5 278.5 H155.5 V322.5 H180.5" fill="none" stroke="#2aaedc" stroke-width="1.3" stroke-dasharray="3,2"/><path d="M177 319.0 L180.5 322.5 L177 326.0" fill="none" stroke="#2aaedc" stroke-width="1.2"/>
<path d="M180.5 421.5 H100.5 V560" fill="none" stroke="#2aaedc" stroke-width="1.3" stroke-dasharray="3,2"/>
<path d="M180.5 443.5 H111.5 V560" fill="none" stroke="#2aaedc" stroke-width="1.3" stroke-dasharray="3,2"/>
<path d="M180.5 476.5 H122.5 V560" fill="none" stroke="#2aaedc" stroke-width="1.3" stroke-dasharray="3,2"/>
<path d="M180.5 498.5 H144.5 V560" fill="none" stroke="#2aaedc" stroke-width="1.3" stroke-dasharray="3,2"/>
<path d="M180.5 542.5 H155.5 V560" fill="none" stroke="#2aaedc" stroke-width="1.3" stroke-dasharray="3,2"/>
<path d="M332.2 103.6 L334.6 101.2 L337 103.6" fill="none" stroke="#a42222" stroke-width="1.1"/>
<path d="M332.2 167.3 L334.6 169.7 L337 167.3" fill="none" stroke="#a42222" stroke-width="1.1"/>
<path d="M332.2 222.3 L334.6 224.7 L337 222.3" fill="none" stroke="#a42222" stroke-width="1.1"/>
<path d="M332.2 244.3 L334.6 246.7 L337 244.3" fill="none" stroke="#a42222" stroke-width="1.1"/>
<path d="M332.2 277.3 L334.6 279.7 L337 277.3" fill="none" stroke="#a42222" stroke-width="1.1"/>
<path d="M332.2 312.6 L334.6 310.2 L337 312.6" fill="none" stroke="#a42222" stroke-width="1.1"/>
<path d="M332.2 420.3 L334.6 422.7 L337 420.3" fill="none" stroke="#a42222" stroke-width="1.1"/>
<path d="M332.2 442.3 L334.6 444.7 L337 442.3" fill="none" stroke="#a42222" stroke-width="1.1"/>
<path d="M332.2 475.3 L334.6 477.7 L337 475.3" fill="none" stroke="#a42222" stroke-width="1.1"/>
<path d="M332.2 497.3 L334.6 499.7 L337 497.3" fill="none" stroke="#a42222" stroke-width="1.1"/>
<path d="M332.2 541.3 L334.6 543.7 L337 541.3" fill="none" stroke="#a42222" stroke-width="1.1"/>
<path d="M68 344 H180" stroke="#3a3ad0" stroke-width="2.2"/><path d="M175.5 339.5 L180.5 344 L175.5 348.5" fill="none" stroke="#3a3ad0" stroke-width="2.6"/>
</svg>
<div id="rip">RIP</div>
<div id="redbox"></div>
</body></html>
